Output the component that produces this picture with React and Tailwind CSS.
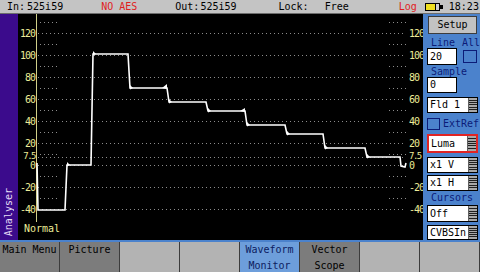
import React from "react";

const mono = "font-['DejaVu_Sans_Mono',monospace]";

const majors = [120, 100, 80, 60, 40, 20, 7.5, 0, -20, -40];
const minors = [130, 110, 90, 70, 50, 30, 10, -10, -30];
const ireY = (v) => Math.round(165 - 1.1 * v) + 0.5;

const trace =
  "M37,163 L38,210 L65,210 L67,165 L91,165 L93,54 L128,54 L130,88 L167,88 L169,102 L206,102 L208,111 L245,111 L247,125 L285,125 L287,134 L323,134 L325,148 L365,148 L367,157 L400,157 L401,166 L405,167 L406,163";

const spikes = [
  [93, 54], [130, 88], [169, 102], [208, 111], [247, 125], [287, 134], [325, 148], [367, 157], [67, 165],
];

const Waveform = () => (
  <svg className="w-[405px] h-[226px] block" viewBox="18 14 405 226">
    <rect x="18" y="14" width="405" height="226" fill="#000" />
    {majors.map((v) => (
      <line key={"M" + v} x1="38" x2="406" y1={ireY(v)} y2={ireY(v)} stroke="#8c8c8c" strokeDasharray="1 3" shapeRendering="crispEdges" />
    ))}
    {minors.map((v) => (
      <g key={"m" + v}>
        <line x1="40" x2="57" y1={ireY(v)} y2={ireY(v)} stroke="#8c8c8c" strokeDasharray="1 3" shapeRendering="crispEdges" />
        <line x1="389" x2="406" y1={ireY(v)} y2={ireY(v)} stroke="#8c8c8c" strokeDasharray="1 3" shapeRendering="crispEdges" />
      </g>
    ))}
    <line x1="36.5" x2="36.5" y1="14" y2="222" stroke="#cfcf8a" shapeRendering="crispEdges" />
    {majors.map((v) => {
      const small = v === 7.5;
      const y = ireY(v) + (small ? 2 : 3.5);
      return (
        <g key={"l" + v} fill="#ecec98" fontFamily="DejaVu Sans Mono, monospace" fontSize={small ? 9 : 10} letterSpacing={small ? -1.5 : -1}>
          <text x="35" y={v === 7.5 ? y - 1 : y} textAnchor="end">{v}</text>
          <text x="409" y={v === 7.5 ? y - 1 : y}>{v}</text>
        </g>
      );
    })}
    <path d={trace} fill="none" stroke="#fff" strokeWidth="1.6" strokeLinejoin="miter" />
    {spikes.map(([x, y]) => (
      <path key={x} d={`M${x},${y - 3} L${x + 3},${y} L${x},${y + 1.5} Z`} fill="#fff" />
    ))}
    <path d="M162,88 L167,84 L167,89 Z" fill="#fff" />
    <path d="M240,111 L245,108 L245,112 Z" fill="#fff" />
    <text x="24" y="232" fill="#ecec98" fontFamily="DejaVu Sans Mono, monospace" fontSize="10">Normal</text>
  </svg>
);

const Lines = () => (
  <div className="w-[9px] self-stretch bg-[#a8a8a8] flex flex-col justify-evenly py-[1px] border-l border-[#606060]">
    {[0, 1, 2, 3, 4].map((i) => (
      <div key={i} className="h-[1px] bg-[#202020]" />
    ))}
  </div>
);

const Drop = ({ label, h = "h-[16px]", red }) => (
  <div className={`w-[51px] ${h} bg-white flex items-stretch ${red ? "border-2 border-[#e02424]" : "border border-black"}`}>
    <div className="flex-1 pl-[2px] flex items-center text-black">{label}</div>
    <Lines />
  </div>
);

const Check = ({ cls = "" }) => <div className={`border border-[#0c1c78] ${cls}`} />;

const Panel = () => (
  <div className={`w-[57px] bg-[#4b82cc] pl-[4px] flex flex-col text-[10px] leading-none ${mono}`}>
    <div className="mt-[2px] ml-[1px] w-[49px] h-[18px] bg-[#c2c2c2] border border-[#3c3c3c] flex items-center justify-center text-black">Setup</div>
    <div className="mt-[3px] h-[11px] pl-[4px] flex items-center justify-between text-[#0c1c78]">
      <span>Line</span>
      <span>All</span>
    </div>
    <div className="flex items-center gap-[6px]">
      <div className="w-[30px] h-[17px] bg-white border border-black flex items-center pl-[2px] text-black">20</div>
      <Check cls="w-[14px] h-[13px]" />
    </div>
    <div className="mt-[1px] h-[11px] pl-[4px] flex items-center text-[#0c1c78]">Sample</div>
    <div className="w-[30px] h-[16px] bg-white border border-black flex items-center pl-[2px] text-black">0</div>
    <div className="mt-[4px]"><Drop label="Fld 1" /></div>
    <div className="mt-[4px] h-[13px] flex items-center gap-[3px] text-[#0c1c78]">
      <Check cls="w-[13px] h-[12px]" />
      <span>ExtRef</span>
    </div>
    <div className="mt-[4px]"><Drop label="Luma" h="h-[19px]" red /></div>
    <div className="mt-[4px]"><Drop label="x1 V" /></div>
    <div className="mt-[2px]"><Drop label="x1 H" /></div>
    <div className="mt-[1px] h-[12px] pl-[4px] flex items-center text-[#0c1c78]">Cursors</div>
    <div className="mt-[1px]"><Drop label="Off" h="h-[17px]" /></div>
    <div className="mt-[3px]"><Drop label="CVBSIn" h="h-[15px]" /></div>
  </div>
);

const buttons = [
  { a: "Main Menu", bg: "bg-[#7c7c7c]" },
  { a: "Picture", bg: "bg-[#7c7c7c]" },
  { a: "", bg: "bg-[#b3b3b3]" },
  { a: "", bg: "bg-[#b3b3b3]" },
  { a: "Waveform", b: "Monitor", bg: "bg-[#6d9edb]", text: "text-[#0c1c60]" },
  { a: "Vector", b: "Scope", bg: "bg-[#7c7c7c]" },
  { a: "", bg: "bg-[#b3b3b3]" },
  { a: "", bg: "bg-[#b3b3b3]" },
];

export default function App() {
  return (
    <div className={`w-[480px] h-[272px] overflow-hidden flex flex-col bg-black ${mono}`}>
      <div className="h-[14px] bg-[#c4c4c4] border-b border-[#6c6c6c] flex items-center text-[10px] leading-none text-black whitespace-pre">
        <span className="ml-[7px]">In:</span>
        <span className="ml-[2px]">525i59</span>
        <span className="ml-[38px] text-[#e01e1e]">NO AES</span>
        <span className="ml-[38px]">Out:</span>
        <span className="ml-[1px]">525i59</span>
        <span className="ml-[42px]">Lock:</span>
        <span className="ml-[16px]">Free</span>
        <span className="ml-[50px] text-[#e01e1e]">Log</span>
        <div className="ml-[8px] flex items-center">
          <div className="w-[15px] h-[8px] border border-black bg-[#d0d0d0] flex">
            <div className="w-[9px] bg-[#f0e020]" />
            <div className="w-[1px] bg-black" />
          </div>
          <div className="w-[3px] h-[4px] bg-black" />
        </div>
        <span className="ml-[6px]">18:23</span>
      </div>
      <div className="h-[226px] flex">
        <div className="w-[18px] bg-[#3b0b8c] flex flex-col justify-end pb-[4px] items-center">
          <span className="[writing-mode:vertical-rl] rotate-180 text-[10px] leading-none text-[#e4dcf4]">Analyser</span>
        </div>
        <Waveform />
        <Panel />
      </div>
      <div className="h-[2px] bg-[#4b82cc]" />
      <div className="h-[30px] flex bg-[#3c3c3c]">
        {buttons.map((b, i) => (
          <div key={i} className={`w-[60px] ${b.bg} border-r border-[#3c3c3c] flex flex-col items-center text-[10px] leading-[16px] ${b.text || "text-black"}`}>
            <span>{b.a}</span>
            {b.b && <span>{b.b}</span>}
          </div>
        ))}
      </div>
    </div>
  );
}
